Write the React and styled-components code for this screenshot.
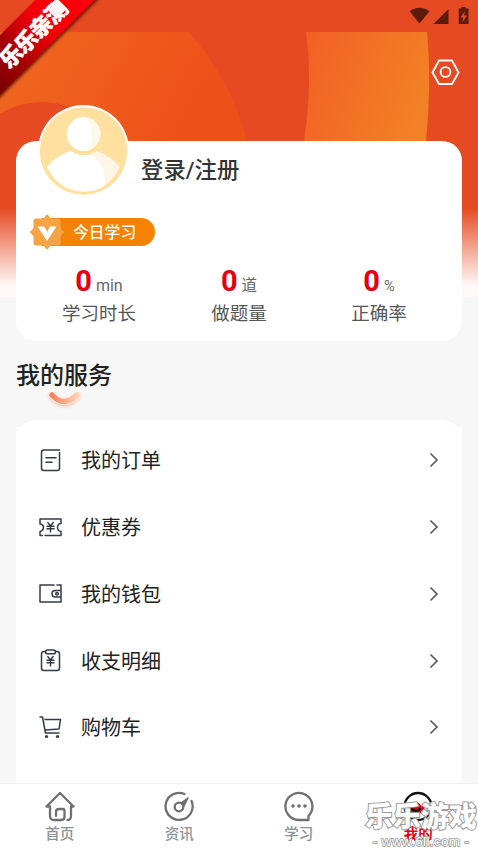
import React from "react";
import styled, { createGlobalStyle } from "styled-components";

const GlobalStyle = createGlobalStyle`
    * {
        box-sizing: border-box;
    }
    body {
        margin: 0;
        background: #f7f7f7;
        font-family: Roboto, "Noto Sans CJK SC", sans-serif;
        color: #222;
    }
`
const Screen = styled.div`
    position: relative;
    width: 478px;
    height: 849px;
    overflow: hidden;
    display: flex;
    flex-direction: column;
`
const Backdrop = styled.div`
    position: absolute;
    top: 0;
    left: 0;
    width: 100%;
    height: 297px;
    z-index: -1;
    background: linear-gradient(#e54a22 0, #e54a22 208px, #fff9f7 286px, #fff9f7 100%);
    svg {
        display: block;
    }
`
const StatusBar = styled.header`
    height: 32px;
    flex: none;
    padding: 7px 8px 0 0;
    display: flex;
    justify-content: flex-end;
    svg {
        display: block;
    }
`
const TopBar = styled.div`
    height: 109px;
    flex: none;
    display: flex;
    justify-content: flex-end;
    padding: 27px 18px 0 0;
`
const Profile = styled.section`
    height: 200px;
    flex: none;
    margin: 0 16px;
    border-radius: 20px;
    background: #fff;
`
const User = styled.div`
    display: flex;
    height: 76px;
    padding-left: 21px;
`
const Avatar = styled.svg`
    flex: none;
    margin-top: -37px;
`
const UserName = styled.h1`
    margin: 12px 0 0 10px;
    font-size: 22.4px;
    line-height: 35px;
    font-weight: 500;
    color: #333;
`
const Today = styled.div`
    display: flex;
    align-items: center;
    position: relative;
    width: 125px;
    height: 28px;
    margin: 1px 0 0 14px;
    padding: 0 0 2px 43px;
    border-radius: 0 14px 14px 0;
    background: linear-gradient(90deg, transparent 12px, #f58105 12px);
    color: #fff;
    font-size: 15.8px;
    font-weight: 500;
`
const Medal = styled.svg`
    position: absolute;
    left: -1px;
    top: -4px;
`
const Stats = styled.div`
    display: flex;
    padding: 18px 13px 0;
`
const Stat = styled.div`
    width: 140px;
    text-align: center;
`
const Value = styled.div`
    height: 35px;
    line-height: 34px;
    font-size: 15.5px;
    color: #666;
    b {
        margin-right: 4px;
        font-size: 29px;
        font-weight: 700;
        color: #e60012;
    }
    small {
        font-size: ${props => props.$unit}px;
    }
`
const Label = styled.div`
    font-size: 18.5px;
    line-height: 30px;
    color: #555;
`
const Heading = styled.div`
    height: 79px;
    flex: none;
    padding: 17px 0 0 16px;
    h2 {
        margin: 0;
        font-size: 24px;
        line-height: 36px;
        font-weight: 500;
    }
    svg {
        display: block;
        margin: -4px 0 0 28px;
    }
`
const Services = styled.div`
    flex: 1;
    margin: 0 16px;
    background: linear-gradient(#fff, #fff) 0 7px no-repeat;
    overflow: hidden;
`
const ServiceList = styled.ul`
    margin: 0;
    padding: 7px 23px 0;
    height: 100%;
    list-style: none;
    border-radius: 20px 20px 0 0;
    background: #fff;
`
const Service = styled.li`
    height: 66.75px;
    display: flex;
    align-items: center;
    font-size: 20px;
    svg {
        display: block;
    }
    span {
        flex: 1;
        margin: -1px 0 0 18px;
    }
`
const Nav = styled.nav`
    height: 66px;
    flex: none;
    display: flex;
    border-top: 1px solid #efefef;
    background: #fff;
`
const Tab = styled.div`
    flex: 1;
    display: flex;
    flex-direction: column;
    align-items: center;
    padding-top: 7px;
    font-size: 14.5px;
    line-height: 21px;
    font-weight: ${props => props.$active ? 700 : 500};
    color: ${props => props.$active ? "#e60012" : "#8b9292"};
    svg {
        display: block;
    }
    span {
        margin-top: 2px;
    }
`
const Ribbon = styled.div`
    position: absolute;
    top: 0;
    left: 0;
    width: 104px;
    height: 104px;
    overflow: hidden;
`
const RibbonBand = styled.div`
    position: absolute;
    left: -51px;
    top: 12px;
    width: 166px;
    height: 42px;
    transform: rotate(-45deg);
    display: flex;
    align-items: center;
    justify-content: center;
    background: linear-gradient(90deg, #7b0000 12%, #a80005 35%, #f40009 58%, #ff000c);
    box-shadow: 0 2px 3px rgba(70, 10, 0, 0.8);
    color: #fff;
    font-size: 22px;
    font-weight: 900;
    letter-spacing: -1px;
    -webkit-text-stroke: 0.5px #fff;
`
const Watermark = styled.div`
    position: absolute;
    right: 0;
    bottom: 0;
    width: 114px;
    height: 48px;
    text-align: center;
    white-space: nowrap;
    color: #fff;
    paint-order: stroke fill;
    font-weight: 900;
    -webkit-text-stroke: 2px #999;
    div {
        font-size: 28px;
        line-height: 34px;
    }
    p {
        margin: 0;
        font: 13.6px/13px "Liberation Sans", sans-serif;
        letter-spacing: 0.3px;
        -webkit-text-stroke: 1.6px #999;
    }
`

const Waves = () => (
    <svg width="478" height="141">
        <defs>
            <linearGradient id="left" x1="0" y1="0" x2="1" y2="0.25">
                <stop offset="0.1" stopColor="#ef661f" />
                <stop offset="0.9" stopColor="#ee5118" />
            </linearGradient>
            <linearGradient id="right" x1="0" y1="0.1" x2="1" y2="0.4">
                <stop offset="0" stopColor="#f36025" />
                <stop offset="1" stopColor="#f28025" />
            </linearGradient>
        </defs>
        <path d="M0 32H189Q232 82 247 141H0Z" fill="url(#left)" />
        <circle cx="42" cy="182" r="80" fill="#e54a22" />
        <path d="M306 32Q313 82 304 141H426Q432 82 427 32Z" fill="url(#right)" />
    </svg>
)

const StatusIcons = () => (
    <svg width="61" height="18" fill="#5c1b0d">
        <path d="M.5 4.2C6.5-.5 14.5-.5 20.5 4.2L10.5 16.5Z" />
        <path d="M24.5 17L39.5 2V17Z" />
        <path fillRule="evenodd" d="M50.5 1.5H52.5V0H56.5V1.5H59.5V17H49.7V1.5ZM56 4L51.500 10.500H54.300L53.300 15.500L58 8.500H55Z" />
    </svg>
)

const SettingsIcon = () => (
    <svg width="29" height="27" fill="none" stroke="#fff" strokeWidth="1.9" strokeLinejoin="round">
        <path d="M8 1.5H21L27.5 13.5L21 25H8L1.5 13.5Z" />
        <circle cx="14.5" cy="13" r="4.9" />
    </svg>
)

const AvatarIcon = () => (
    <Avatar width="94" height="94">
        <circle cx="46.5" cy="46.500" r="45.500" fill="#fff" />
        <circle cx="46.5" cy="47" r="43.8" fill="#ffe09e" />
        <path d="M10 63Q19 52 34 47Q46 55 60 47Q75 53 83 63Q71 87 46.500 87.500Q22 87 10 63Z" fill="#fff5e6" />
        <path d="M10 63Q19 52 34 47Q42 53 55 51Q70 62 67.500 82Q58 87.500 46.500 87.500Q22 87 10 63Z" fill="#fff" />
        <circle cx="46.7" cy="30" r="21" fill="#ffe09e" />
        <circle cx="46.7" cy="30" r="17" fill="#fff8eb" />
        <path d="M48 13A17 17 0 1 0 51 46.500Q60 28 48 13Z" fill="#fff" />
    </Avatar>
)

const Smile = () => (
    <svg width="42" height="24" fill="none" strokeLinecap="round">
        <defs>
            <linearGradient id="smile">
                <stop stopColor="#ff815d" />
                <stop offset="1" stopColor="#ffd0ae" />
            </linearGradient>
            <filter id="glow" x="-30%" y="-60%" width="160%" height="260%">
                <feGaussianBlur stdDeviation="1.4" />
            </filter>
        </defs>
        <path d="M8 6.500Q20 20.500 33 6.500" stroke="#ffc0aa" strokeWidth="6.500" filter="url(#glow)" />
        <path d="M8.300 5.500Q20 18.500 33.300 5.500" stroke="#fff3ed" strokeWidth="6.500" />
        <path d="M8 5Q20 18 33 5" stroke="url(#smile)" strokeWidth="5.500" />
    </svg>
)

const Yen = ({ y = 0 }) => (
    <path strokeWidth="1.4" transform={`translate(0 ${y})`} d="M8.8 7.5L11.500 11L14.200 7.500M8 11.200H15M8 13.700H15M11.500 11V17" />
)

const serviceIcons = {
    order: <path d="M20.500 4.500V20.500Q20.500 22.500 18 22.500H5Q2.500 22.500 2.500 20V4.500Q2.500 2 5 2H20.500M7 9.700H17M7 14.300H13" />,
    coupon: <><path d="M1 9V4H22V8.500Q18.500 9 18.500 12.500T22 16.500V20.500H6M3.500 20.500H1V16.500Q4.500 15.500 4.500 12.500T1 9" /><Yen /></>,
    wallet: <path d="M15 4H1V21H22V16H16.500Q13 16 13 12.800T16.500 9.500H22V4H18M22 9.500V16M18 11.500A1.200 1.200 0 1 0 18 14A1.200 1.200 0 1 0 18 11.500" />,
    detail: <><path d="M6.500 3.500H5Q2.500 3.500 2.500 6V20Q2.500 22.500 5 22.500H18Q20.500 22.500 20.500 20V6Q20.500 3.500 18 3.500H16.500" /><rect x="6.500" y="2" width="10" height="3.800" rx="1.900" /><Yen y={1} /></>,
    cart: <><path d="M1 2H3.500L6.500 18H20M6 4.500H21.500L20 14L6.500 15" /><g fill="#333c46" stroke="none"><circle cx="7.500" cy="21.500" r="1.600" /><circle cx="18.500" cy="21.500" r="1.600" /></g></>,
}

const services = [
    ["order", "我的订单"],
    ["coupon", "优惠券"],
    ["wallet", "我的钱包"],
    ["detail", "收支明细"],
    ["cart", "购物车"],
]

const stats = [
    ["0", "min", "学习时长", 16],
    ["0", "道", "做题量", 15.5],
    ["0", "%", "正确率", 14.5],
]

const tabs = [
    ["首页", <path d="M4 15.5H1.500L15 2L28.500 15.500H26V25Q26 29 22.500 29M5 15.500V25Q5 29 9 29H16Q19.500 29 19.500 26V20Q19.500 18 17.500 18H14Q11 18 11 21V25" />],
    ["资讯", <><path d="M20.5 3A13.500 13.500 0 1 0 27.500 10" /><circle cx="15" cy="16" r="4.300" /><path d="M17 12L24 7L20 15Z" fill="#6f6f6f" strokeWidth="1.500" /></>],
    ["学习", <><path d="M24.5 25A13.500 13.500 0 1 0 15 29H24.500Z" /><g fill="#6f6f6f" stroke="none"><circle cx="9" cy="15" r="1.800" /><circle cx="15" cy="15" r="1.800" /><circle cx="21" cy="15" r="1.800" /></g></>],
    ["我的", <><circle cx="15" cy="15.500" r="13.500" stroke="#111" /><circle cx="12" cy="18" r="7" fill="#e60012" stroke="none" /><path d="M13 18H20V14" stroke="#e60012" strokeWidth="3" /><path d="M8 17Q12 22 17 18" stroke="#111" /></>],
]

const App = () => (
    <Screen>
        <GlobalStyle />
        <Backdrop><Waves /></Backdrop>
        <StatusBar><StatusIcons /></StatusBar>
        <TopBar><SettingsIcon /></TopBar>
        <Profile>
            <User>
                <AvatarIcon />
                <UserName>登录/注册</UserName>
            </User>
            <Today>
                <Medal width="36" height="36">
                    <path d="M14 4.500Q16 3.500 16.500 1.500Q18 0 19.500 1.500Q20 3.500 22 4.500H29Q31.500 4.500 31.500 7V13.500Q32 15.500 35.500 18Q32 20.500 31.500 22.500V29Q31.500 31.500 29 31.500H22Q20 32.500 19.500 34.500Q18 36 16.500 34.500Q16 32.500 14 31.500H7Q4.500 31.500 4.500 29V22.500Q4 20.500 .5 18Q4 15.500 4.500 13.500V7Q4.500 4.500 7 4.500Z" fill="#f5a344" />
                    <path d="M8.500 12.500H15L18.500 18L20.500 12.500H27.500L18 27Z" fill="#fff" />
                </Medal>
                今日学习
            </Today>
            <Stats>
                {stats.map(([value, unit, label, size]) => (
                    <Stat key={label}>
                        <Value $unit={size}><b>{value}</b><small>{unit}</small></Value>
                        <Label>{label}</Label>
                    </Stat>
                ))}
            </Stats>
        </Profile>
        <Heading>
            <h2>我的服务</h2>
            <Smile />
        </Heading>
        <Services>
            <ServiceList>
                {services.map(([icon, label]) => (
                    <Service key={icon}>
                        <svg width="24" height="25" fill="none" stroke="#333c46" strokeWidth="1.5" strokeLinecap="round" strokeLinejoin="round">
                            {serviceIcons[icon]}
                        </svg>
                        <span>{label}</span>
                        <svg width="10" height="16" fill="none" stroke="#555d66" strokeWidth="1.7">
                            <path d="M1.5 1.5L8 8L1.5 14.5" />
                        </svg>
                    </Service>
                ))}
            </ServiceList>
        </Services>
        <Nav>
            {tabs.map(([label, icon], i) => (
                <Tab key={label} $active={i === 3}>
                    <svg width="30" height="31" fill="none" stroke="#6f6f6f" strokeWidth="2.3" strokeLinecap="round" strokeLinejoin="round">
                        {icon}
                    </svg>
                    <span>{label}</span>
                </Tab>
            ))}
        </Nav>
        <Ribbon><RibbonBand>乐乐亲测</RibbonBand></Ribbon>
        <Watermark>
            <div>乐乐游戏</div>
            <p>- www.6ll.com -</p>
        </Watermark>
    </Screen>
)

export default App;
